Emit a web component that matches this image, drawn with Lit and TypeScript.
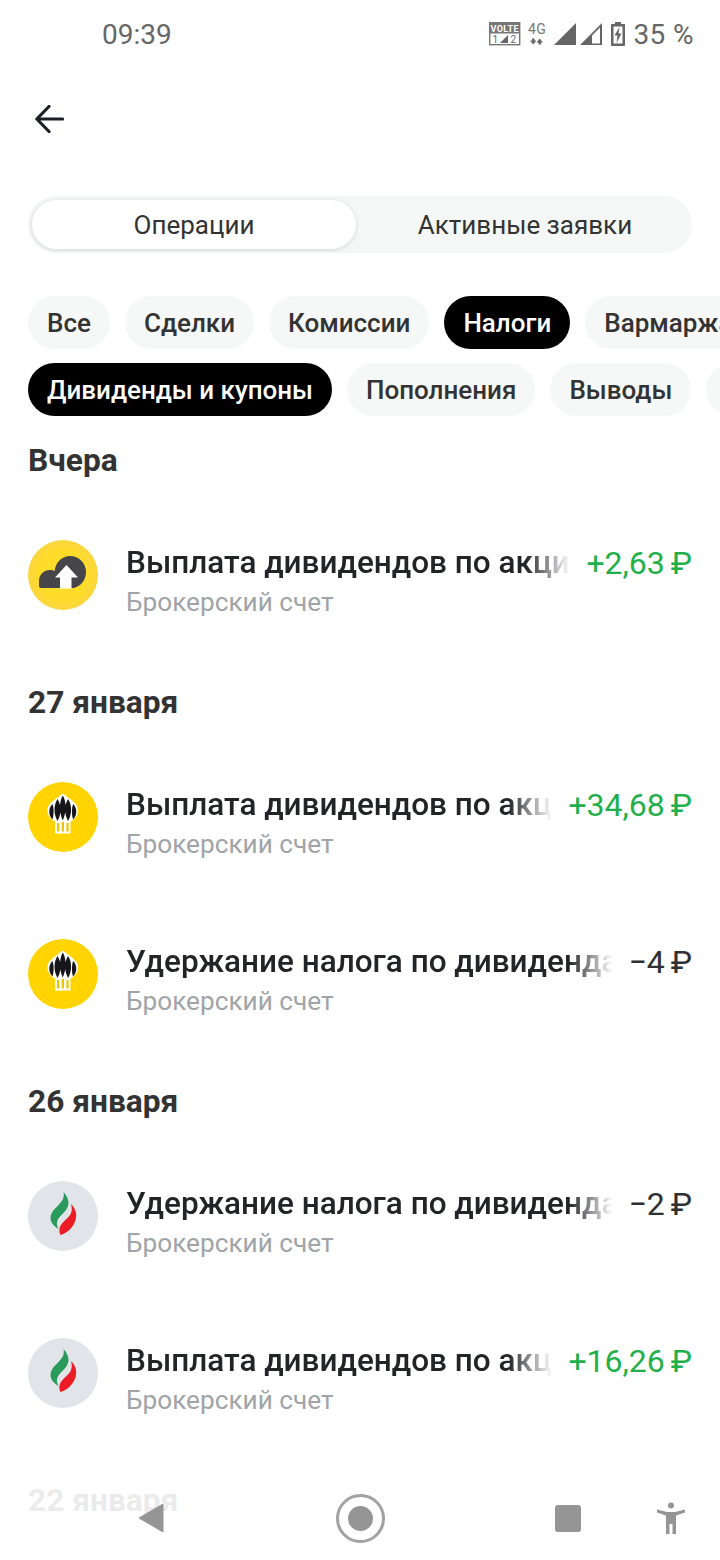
import {LitElement, html, css, svg} from 'lit';
import {customElement} from 'lit/decorators.js';
import {classMap} from 'lit/directives/class-map.js';

type Logo = 'cloud' | 'rosneft' | 'tatneft';

interface Operation {
  logo: Logo;
  title: string;
  amount: string;
  positive: boolean;
}

const ROW_ONE = [
  {label: 'Все'},
  {label: 'Сделки'},
  {label: 'Комиссии'},
  {label: 'Налоги', active: true},
  {label: 'Вармаржа'}
];

const ROW_TWO = [
  {label: 'Дивиденды и купоны', active: true},
  {label: 'Пополнения'},
  {label: 'Выводы'},
  {label: 'Прочее'}
];

const PAYOUT = 'Выплата дивидендов по акциям';
const TAX = 'Удержание налога по дивидендам';

const SECTIONS: {date: string; items: Operation[]}[] = [
  {
    date: 'Вчера',
    items: [{logo: 'cloud', title: PAYOUT, amount: '+2,63 ₽', positive: true}]
  },
  {
    date: '27 января',
    items: [
      {logo: 'rosneft', title: PAYOUT, amount: '+34,68 ₽', positive: true},
      {logo: 'rosneft', title: TAX, amount: '−4 ₽', positive: false}
    ]
  },
  {
    date: '26 января',
    items: [
      {logo: 'tatneft', title: TAX, amount: '−2 ₽', positive: false},
      {logo: 'tatneft', title: PAYOUT, amount: '+16,26 ₽', positive: true}
    ]
  },
  {date: '22 января', items: []}
];

const LOGOS: Record<Logo, unknown> = {
  cloud: svg`
    <defs>
      <radialGradient id="sun" cx="50%" cy="50%" r="50%">
        <stop offset="0.7" stop-color="#fedc2a"/>
        <stop offset="1" stop-color="#f9d640"/>
      </radialGradient>
    </defs>
    <circle cx="35" cy="35" r="35" fill="url(#sun)"/>
    <path d="M11 46V41C11 34.500 16 30 22 30C24 30 25.500 30.500 26.500 31C27.500 22.500 34 16 42 16C51 16 58 23 58 32C58 40 53 46 46 48H13C12 48 11 47 11 46Z" fill="#45454a"/>
    <path d="M38.500 25L50 37.500H43.500V48.500H32V37.500H27Z" fill="#fff"/>
  `,
  rosneft: svg`
    <circle cx="35" cy="35" r="35" fill="#ffd400"/>
    <path d="M27 51.500V39.500C22 37 19 32 19.500 27C20 24 21.500 22 23.500 20.500C25.500 18 28 16.500 30 15.500C32 13.500 33.500 12 34.800 12C36 12 37.500 13.500 39.500 15.500C41.500 16.500 44 18 46 20.500C48 22 49.500 24 50 27C50.500 32 47.500 37 42.500 39.500V51.500Z" fill="#fff"/>
    <path d="M24.500 37.500C20.500 33.500 20 26.500 24.500 22C26 26 26 33 24.500 37.500Z M29.500 39C25.500 32 25.500 23 29.500 17C33.500 23 33.500 32 29.500 39Z M34.800 38.500C31 30 31 20 34.800 13.500C38.600 20 38.600 30 34.800 38.500Z M40.100 39C36.100 32 36.100 23 40.100 17C44.100 23 44.100 32 40.100 39Z M45.100 37.500C43.600 33 43.600 26 45.100 22C49.600 26.500 49.100 33.500 45.100 37.500Z" fill="#15151a"/>
    <path d="M29 41H31.200V49.500H29Z M33.700 40H36V49.500H33.700Z M38.400 41H40.600V49.500H38.400Z" fill="#f0c400"/>
  `,
  tatneft: svg`
    <circle cx="35" cy="35" r="35" fill="#e1e4e8"/>
    <path d="M35.500 11C36.500 16 35 19.500 30.500 24C26 28.500 22.500 32 22.500 37C22.500 41.500 26 45.500 30.500 48C28 43 28.500 39 32.500 35C37 30.500 40.500 27 40.500 22C40.500 18 38.500 14 35.500 11Z" fill="#2a9a5c"/>
    <path d="M43 23C44.500 28 44 32.500 40 36.500C36 40.500 32 43.500 31.500 48C31.200 50 31.500 52 32.500 54C37 52.500 41 50 44 46C48 41 49 34.500 47.500 30C46.500 27 45 25 43 23Z" fill="#ec1c24"/>
  `
};

@customElement('app-root')
export class AppRoot extends LitElement {
  static styles = css`
    :host {
      display: block;
      position: relative;
      width: 720px;
      height: 1560px;
      overflow: hidden;
      background: #fff;
      font-family: Roboto, "Noto Sans", sans-serif;
      color: #2f3033;
    }

    .status {
      display: flex;
      align-items: center;
      justify-content: space-between;
      height: 68px;
      padding: 0 26px 0 102px;
      font-size: 28px;
      color: #666;
    }

    .status-right {
      display: flex;
      align-items: center;
      gap: 8px;
      letter-spacing: 0.4px;
    }

    .back {
      display: flex;
      align-items: center;
      height: 102px;
      padding-left: 35px;
      margin-bottom: 26px;
    }

    .segment {
      position: relative;
      display: flex;
      height: 57px;
      margin: 0 28px;
      border-radius: 29px;
      background: #f5f7f7;
      font-size: 26px;
    }

    .tab {
      display: flex;
      align-items: center;
      justify-content: center;
      box-sizing: border-box;
      height: 49px;
      margin-top: 4px;
      color: #333;
    }

    .tab.on {
      width: 324px;
      margin-left: 4px;
      border-radius: 25px;
      background: #fff;
      box-shadow: 0 1px 4px rgba(0, 0, 0, 0.14);
    }

    .tab.off {
      flex: 1;
      padding-left: 2px;
    }

    .chips {
      display: flex;
      flex-direction: column;
      gap: 14px;
      margin-top: 43px;
    }

    .chip-row {
      display: flex;
      gap: 15px;
      padding-left: 28px;
      overflow: hidden;
    }

    .chip {
      flex: none;
      height: 53px;
      padding: 0 19px;
      border-radius: 27px;
      background: #f6f7f7;
      font-size: 26px;
      font-weight: 500;
      line-height: 54px;
      color: #333;
    }

    .chip.on {
      background: #000;
      color: #fff;
    }

    .list {
      margin-top: 24px;
      padding: 0 28px;
    }

    .section {
      margin-bottom: 29px;
    }

    .date {
      height: 40px;
      margin-bottom: 16px;
      font-size: 31.700px;
      font-weight: 700;
      line-height: 42px;
      color: #333;
    }

    .row {
      display: flex;
      align-items: center;
      height: 157px;
    }

    .logo {
      flex: none;
      width: 70px;
      height: 70px;
      margin-right: 28px;
    }

    .body {
      flex: 1;
      min-width: 0;
      padding-top: 11px;
    }

    .line {
      display: flex;
      justify-content: space-between;
      gap: 16px;
      height: 44px;
      line-height: 44px;
    }

    .title {
      flex: 1;
      min-width: 0;
      overflow: hidden;
      white-space: nowrap;
      font-size: 31.500px;
      font-weight: 500;
      color: #232427;
      -webkit-mask-image: linear-gradient(to left, transparent 0, #000 44px);
      mask-image: linear-gradient(to left, transparent 0, #000 44px);
    }

    .amount {
      flex: none;
      font-size: 32px;
      word-spacing: -2px;
      color: #2f3033;
    }

    .amount.plus {
      color: #1fb04b;
    }

    .sub {
      height: 35px;
      line-height: 35px;
      font-size: 26.200px;
      color: #a0a4a8;
    }

    .fade {
      position: absolute;
      left: 0;
      right: 0;
      bottom: 0;
      height: 90px;
      background: linear-gradient(to bottom, rgba(255, 255, 255, 0), rgba(255, 255, 255, 0.9) 14px);
    }

    .nav {
      position: absolute;
      left: 0;
      top: 1490px;
    }
  `;

  private _statusIcons() {
    return html`
      <svg width="114" height="28" viewBox="0 0 114 28">
        <rect x="0.700" y="2.700" width="30" height="22" fill="none" stroke="#777" stroke-width="1.400"/>
        <rect x="1" y="3" width="29.500" height="10.500" fill="#777"/>
        <text x="15.700" y="11.500" text-anchor="middle" font-family="Roboto" font-size="9" font-weight="700" fill="#fff">VOLTE</text>
        <text x="3.500" y="23" font-family="Roboto" font-size="10" fill="#666">1</text>
        <path d="M11 23L19 15V23Z" fill="#666"/>
        <text x="21.500" y="23" font-family="Roboto" font-size="10" fill="#666">2</text>
        <text x="48" y="13.500" text-anchor="middle" font-family="Roboto" font-size="14" fill="#777">4G</text>
        <path d="M43 18.500H45.500V20.500H47.500L44.200 24.500L41 20.500H43Z M49.500 24.500H52V22.500H54L50.700 18.500L47.500 22.500H49.500Z" fill="#666"/>
        <path d="M65 25L87 3V25Z" fill="#666"/>
        <path d="M91 25L113 3V25Z" fill="#666"/>
        <path d="M103 23.500V15.500L111 7.500V23.500Z" fill="#fff"/>
      </svg>
      <svg width="14" height="24" viewBox="0 0 14 24">
        <path d="M4 0H10V2H13C13.600 2 14 2.400 14 3V23C14 23.600 13.600 24 13 24H1C0.400 24 0 23.600 0 23V3C0 2.400 0.400 2 1 2H4Z" fill="#666"/>
        <rect x="2.500" y="4.500" width="9" height="17" fill="#fff"/>
        <path d="M8.500 5L3.500 13.500H6.500L5.500 21L10.500 11.500H7.500Z" fill="#666"/>
      </svg>
      <span>35 %</span>
    `;
  }

  private _backArrow() {
    return html`
      <svg width="29" height="28" viewBox="0 0 29 28" fill="none" stroke="#1c2026" stroke-width="3.200" stroke-linecap="round" stroke-linejoin="round">
        <path d="M2 14H27.500M14 1.500L1.800 14L14 26.500"/>
      </svg>
    `;
  }

  private _nav() {
    return html`
      <svg class="nav" width="720" height="60" viewBox="0 0 720 60">
        <path d="M163 14V42L139 28Z" fill="#959595" stroke="#959595" stroke-width="1" stroke-linejoin="round"/>
        <circle cx="360.500" cy="28.500" r="23" fill="none" stroke="#a2a2a2" stroke-width="3"/>
        <circle cx="360.500" cy="28.500" r="12.500" fill="#959595"/>
        <rect x="555" y="15" width="26" height="27" rx="3" fill="#959595"/>
        <circle cx="671" cy="15.500" r="3" fill="#959595"/>
        <path d="M657 19.500L667 22H675L685 19.500V22.500L676 25.500V44H672.500V34H669.500V44H666V25.500L657 22.500Z" fill="#959595"/>
      </svg>
    `;
  }

  private _row(op: Operation) {
    return html`
      <div class="row">
        <svg class="logo" viewBox="0 0 70 70">${LOGOS[op.logo]}</svg>
        <div class="body">
          <div class="line">
            <span class="title">${op.title}</span>
            <span class=${classMap({amount: true, plus: op.positive})}>${op.amount}</span>
          </div>
          <div class="sub">Брокерский счет</div>
        </div>
      </div>
    `;
  }

  private _chips(chips: {label: string; active?: boolean}[]) {
    return html`
      <div class="chip-row">
        ${chips.map((c) => html`<div class=${classMap({chip: true, on: !!c.active})}>${c.label}</div>`)}
      </div>
    `;
  }

  render() {
    return html`
      <div class="status">
        <span>09:39</span>
        <div class="status-right">${this._statusIcons()}</div>
      </div>
      <div class="back">${this._backArrow()}</div>
      <div class="segment">
        <div class="tab on">Операции</div>
        <div class="tab off">Активные заявки</div>
      </div>
      <div class="chips">
        ${this._chips(ROW_ONE)}
        ${this._chips(ROW_TWO)}
      </div>
      <div class="list">
        ${SECTIONS.map((s) => html`
          <div class="section">
            <div class="date">${s.date}</div>
            ${s.items.map((op) => this._row(op))}
          </div>
        `)}
      </div>
      <div class="fade"></div>
      ${this._nav()}
    `;
  }
}
